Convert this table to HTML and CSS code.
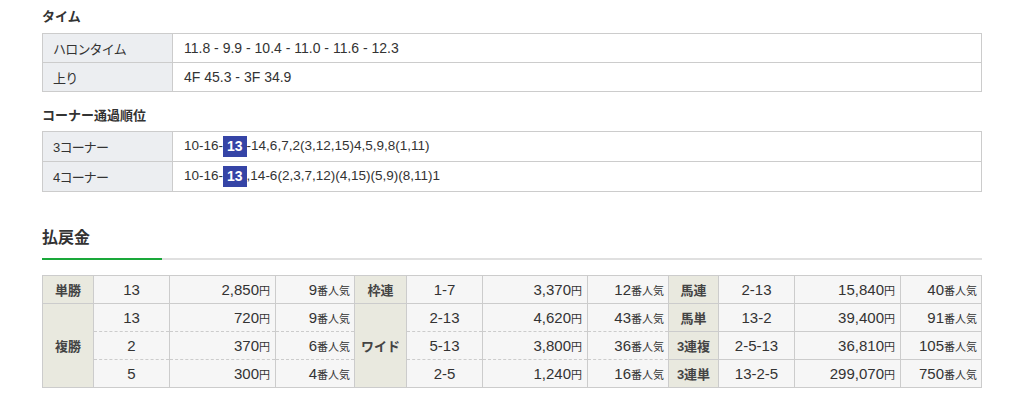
FILE: index.html
```html
<!DOCTYPE html>
<html lang="ja">
<head>
<meta charset="utf-8">
<title>レース結果</title>
<link rel="stylesheet" href="styles.css">
</head>
<body>
<div class="page">
  <h3 class="sub-title first">タイム</h3>
  <table class="info">
    <tr><th>ハロンタイム</th><td class="laps">11.8 - 9.9 - 10.4 - 11.0 - 11.6 - 12.3</td></tr>
    <tr><th>上り</th><td class="laps">4F 45.3 - 3F 34.9</td></tr>
  </table>

  <h3 class="sub-title">コーナー通過順位</h3>
  <table class="info corner">
    <tr><th>3コーナー</th><td>10-16-<span class="mark">13</span>-14,6,7,2(3,12,15)4,5,9,8(1,11)</td></tr>
    <tr><th>4コーナー</th><td>10-16-<span class="mark">13</span>,14-6(2,3,7,12)(4,15)(5,9)(8,11)1</td></tr>
  </table>

  <h2 class="main-title">払戻金</h2>

  <table class="pay">
    <colgroup>
      <col class="c-h1"><col class="c-n"><col class="c-a"><col class="c-p1">
      <col class="c-h2"><col class="c-n"><col class="c-a2"><col class="c-p">
      <col class="c-h3"><col class="c-n"><col class="c-a"><col class="c-p">
    </colgroup>
    <tr>
      <th>単勝</th><td class="num">13</td><td class="amt">2,850<span class="u">円</span></td><td class="pop">9<span class="u">番人気</span></td>
      <th>枠連</th><td class="num">1-7</td><td class="amt">3,370<span class="u">円</span></td><td class="pop">12<span class="u">番人気</span></td>
      <th>馬連</th><td class="num">2-13</td><td class="amt">15,840<span class="u">円</span></td><td class="pop">40<span class="u">番人気</span></td>
    </tr>
    <tr>
      <th rowspan="3">複勝</th><td class="num db">13</td><td class="amt db">720<span class="u">円</span></td><td class="pop db">9<span class="u">番人気</span></td>
      <th rowspan="3">ワイド</th><td class="num db">2-13</td><td class="amt db">4,620<span class="u">円</span></td><td class="pop db">43<span class="u">番人気</span></td>
      <th>馬単</th><td class="num">13-2</td><td class="amt">39,400<span class="u">円</span></td><td class="pop">91<span class="u">番人気</span></td>
    </tr>
    <tr>
      <td class="num dt db">2</td><td class="amt dt db">370<span class="u">円</span></td><td class="pop dt db">6<span class="u">番人気</span></td>
      <td class="num dt db">5-13</td><td class="amt dt db">3,800<span class="u">円</span></td><td class="pop dt db">36<span class="u">番人気</span></td>
      <th>3連複</th><td class="num">2-5-13</td><td class="amt">36,810<span class="u">円</span></td><td class="pop">105<span class="u">番人気</span></td>
    </tr>
    <tr>
      <td class="num dt">5</td><td class="amt dt">300<span class="u">円</span></td><td class="pop dt">4<span class="u">番人気</span></td>
      <td class="num dt">2-5</td><td class="amt dt">1,240<span class="u">円</span></td><td class="pop dt">16<span class="u">番人気</span></td>
      <th>3連単</th><td class="num">13-2-5</td><td class="amt">299,070<span class="u">円</span></td><td class="pop">750<span class="u">番人気</span></td>
    </tr>
  </table>
</div>
</body>
</html>
```

FILE: styles.css
```css
html, body {
  margin: 0;
  padding: 0;
  background: #fff;
}

body {
  font-family: "Liberation Sans", "Noto Sans CJK JP", sans-serif;
  color: #333;
}

.page {
  width: 940px;
  margin-left: 42px;
}

.sub-title {
  font-size: 13px;
  font-weight: bold;
  line-height: 20px;
  margin: 0 0 5px;
  color: #333;
}

.sub-title.first {
  padding-top: 7px;
  margin-bottom: 6px;
}

.info {
  width: 100%;
  border-collapse: collapse;
  table-layout: fixed;
  margin-bottom: 14px;
}

.info th,
.info td {
  border: 1px solid #ccc;
  height: 28px;
  padding: 0 11px;
  font-size: 13.5px;
  font-weight: normal;
  text-align: left;
  vertical-align: middle;
}

.info td.laps {
  font-size: 14px;
}

.info th {
  width: 108px;
  background: #eceef1;
  font-size: 13px;
  letter-spacing: -0.8px;
  padding-left: 10px;
}

.info.corner th,
.info.corner td {
  height: 29px;
}

.mark {
  display: inline-block;
  background: #3544a6;
  color: #fff;
  font-weight: bold;
  font-size: 14px;
  line-height: 21px;
  padding: 0 4px;
  vertical-align: middle;
}

.main-title {
  font-size: 16px;
  font-weight: bold;
  line-height: 20px;
  margin: 36px 0 0;
  padding-bottom: 10px;
  position: relative;
  border-bottom: 2px solid #e0e0e0;
}

.main-title::after {
  content: "";
  position: absolute;
  left: 0;
  bottom: -2px;
  width: 120px;
  height: 2px;
  background: #1aa83a;
}

.pay {
  width: 940px;
  margin-top: 15px;
  border-collapse: collapse;
  table-layout: fixed;
}

.c-h1 { width: 51px; }
.c-h2 { width: 52px; }
.c-h3 { width: 50px; }
.c-n { width: 76px; }
.c-a { width: 106px; }
.c-a2 { width: 105px; }
.c-p1 { width: 79px; }
.c-p { width: 81px; }

.pay th,
.pay td {
  border: 1px solid #ccc;
  height: 27px;
  padding: 0;
  vertical-align: middle;
}

.pay th {
  background: #e9e9df;
  font-size: 13px;
  font-weight: bold;
  text-align: center;
  color: #444;
}

.pay td {
  background: #f6f6f6;
  font-size: 15px;
}

.pay td.num {
  text-align: center;
}

.pay td.amt {
  text-align: right;
  padding-right: 5px;
}

.pay td.pop {
  text-align: right;
  padding-right: 4px;
}

.pay .u {
  font-size: 11px;
}

.pay td.db {
  border-bottom: 1px dashed #ccc;
}

.pay td.dt {
  border-top: 1px dashed #ccc;
}
```
